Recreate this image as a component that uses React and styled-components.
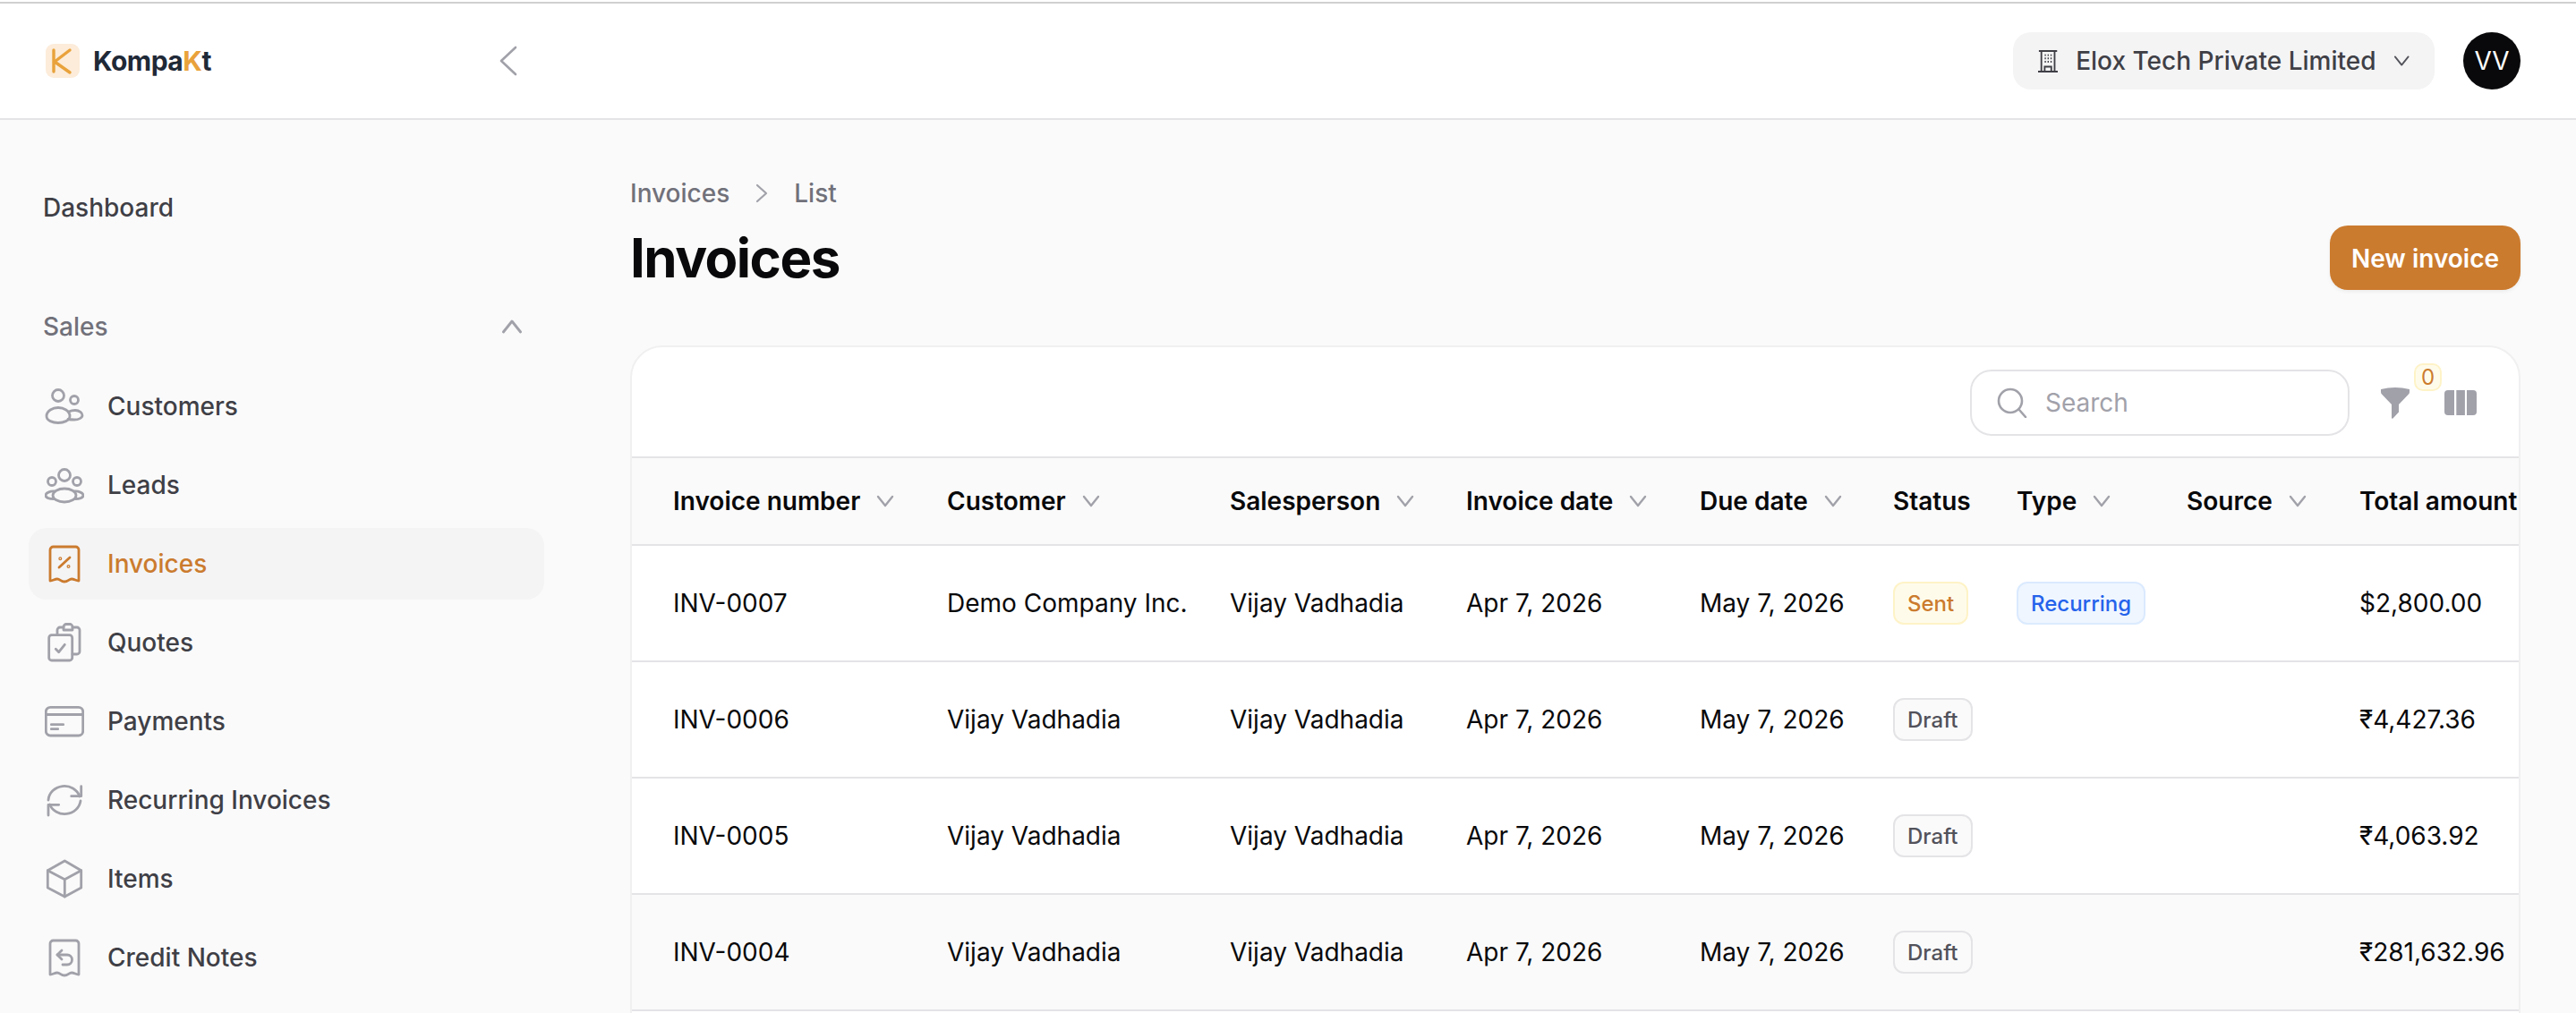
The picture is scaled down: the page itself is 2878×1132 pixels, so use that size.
import React from 'react';
import styled, { createGlobalStyle } from 'styled-components';

const GlobalStyle = createGlobalStyle`
    * { box-sizing: border-box; }
    html, body { margin: 0; height: 100%; overflow: hidden; }
    body {
        background: #fafafa;
        color: #09090b;
        font-family: 'Inter', 'Liberation Sans', sans-serif;
        font-size: 28px;
    }
`;

const columns = '306px 316px 264px 261px 216px 138px 190px 193px 1fr';

const invoices = [
    { number: 'INV-0007', customer: 'Demo Company Inc.', status: 'Sent', type: 'Recurring', total: '$2,800.00' },
    { number: 'INV-0006', customer: 'Vijay Vadhadia', status: 'Draft', total: '₹4,427.36' },
    { number: 'INV-0005', customer: 'Vijay Vadhadia', status: 'Draft', total: '₹4,063.92' },
    { number: 'INV-0004', customer: 'Vijay Vadhadia', status: 'Draft', total: '₹281,632.96', hovered: true },
];

const headings = [
    { label: 'Invoice number', sortable: true },
    { label: 'Customer', sortable: true },
    { label: 'Salesperson', sortable: true },
    { label: 'Invoice date', sortable: true },
    { label: 'Due date', sortable: true },
    { label: 'Status' },
    { label: 'Type', sortable: true },
    { label: 'Source', sortable: true },
    { label: 'Total amount' },
];

const badgeColors = {
    Sent: { bg: '#fffbeb', line: '#fef3c7', text: '#cb7b2e' },
    Recurring: { bg: '#eff6ff', line: '#dbeafe', text: '#2563eb' },
    Draft: { bg: '#fafafa', line: '#e4e4e7', text: '#52525b' },
};

const NavSvg = ({ children }) => (
    <NavIconSvg viewBox="0 0 44 44" fill="none" stroke="currentColor" strokeWidth="2.8" strokeLinecap="round" strokeLinejoin="round">
        {children}
    </NavIconSvg>
);

const receipt = 'M6 41V6.5A3.5 3.5 0 0 1 9.5 3h25A3.5 3.5 0 0 1 38 6.5V41C35 41 33 39 30 39C27 39 26 42 22 42C18 42 17 39 14 39C11 39 9 41 6 41Z';

const navItems = [
    {
        label: 'Customers',
        icon: (
            <NavSvg>
                <circle cx="15" cy="10" r="6.5" />
                <circle cx="33" cy="15" r="4.5" />
                <path d="M2 33C2 27 9 23.5 15 23.5C21 23.5 28 27 28 33C28 38 21 40.5 15 40.5C9 40.5 2 38 2 33Z" />
                <path d="M27 28C29 27 32 26.5 34 26.5C39 26.5 42 29.5 42 32C42 35 38 37 33 37C31 37 29 37 26 36.5" />
            </NavSvg>
        ),
    },
    {
        label: 'Leads',
        icon: (
            <NavSvg>
                <circle cx="22" cy="11" r="6.5" />
                <circle cx="8" cy="18" r="4.5" />
                <circle cx="36" cy="18" r="4.5" />
                <ellipse cx="22" cy="33.5" rx="13" ry="7.5" />
                <path d="M11 29C6 28.5 1 31 1 33.5C1 36 5 37.5 10 37.5" />
                <path d="M33 29C38 28.5 43 31 43 33.5C43 36 39 37.5 34 37.5" />
            </NavSvg>
        ),
    },
    {
        label: 'Invoices',
        active: true,
        icon: (
            <NavSvg>
                <path d={receipt} />
                <path d="M16 26L28 15" />
                <circle cx="17.3" cy="16.3" r="0.6" />
                <circle cx="26.5" cy="25" r="0.6" />
            </NavSvg>
        ),
    },
    {
        label: 'Quotes',
        icon: (
            <NavSvg>
                <rect x="4.7" y="13.7" width="26" height="28.3" rx="3" />
                <path d="M14 13V8a3 3 0 0 1 3-3h4M31 5h5a3 3 0 0 1 3 3v24a3 3 0 0 1-3 3h-5" />
                <path d="M21 8V4.5a3 3 0 0 1 3-3h4a3 3 0 0 1 3 3V8Z" />
                <path d="M12.3 29.3L15.7 32.7L22.3 24.3" />
            </NavSvg>
        ),
    },
    {
        label: 'Payments',
        icon: (
            <NavSvg>
                <rect x="1.3" y="6.3" width="41.4" height="31.7" rx="5" />
                <path d="M1.3 14.5H42.7" />
                <path d="M7.3 25.7H20.7M7.3 30.7H14.7" />
            </NavSvg>
        ),
    },
    {
        label: 'Recurring Invoices',
        icon: (
            <NavSvg>
                <path d="M4 22A18 17 0 0 1 39 18" />
                <path d="M40.7 6.7V17.7H29.7" />
                <path d="M40 23A18 17 0 0 1 5.5 27" />
                <path d="M4 39V27.3H15.7" />
            </NavSvg>
        ),
    },
    {
        label: 'Items',
        icon: (
            <NavSvg>
                <path d="M22.3 2L40.7 12.7V32L22.3 42L3.3 32V12.7Z" />
                <path d="M3.3 12.7L22.3 22.7L40.7 12.7M22.3 22.7V42" />
            </NavSvg>
        ),
    },
    {
        label: 'Credit Notes',
        icon: (
            <NavSvg>
                <path d={receipt} />
                <path d="M19 14L14 19L19 24" />
                <path d="M14 19H25a5.5 5.5 0 0 1 0 11H20" />
            </NavSvg>
        ),
    },
];

const Chevron = ({ size = 20, direction = 'down', color = '#a1a1aa', weight = 2.4 }) => {
    const points = {
        down: 'M2 5L10 15L18 5',
        up: 'M2 15L10 5L18 15',
    };
    return (
        <svg width={size} height={size} viewBox="0 0 20 20" fill="none" stroke={color} strokeWidth={weight} strokeLinecap="round" strokeLinejoin="round">
            <path d={points[direction]} />
        </svg>
    );
};

export default function App() {
    return (
        <Page>
            <GlobalStyle />
            <TopBar>
                <BrandArea>
                    <Brand>
                        <LogoMark viewBox="0 0 38 38">
                            <rect width="38" height="38" rx="9" fill="#fcecd9" />
                            <path d="M9 7V31M27 7L10 20L27 32" fill="none" stroke="#e9a23b" strokeWidth="3.4" strokeLinecap="round" strokeLinejoin="round" />
                        </LogoMark>
                        <Wordmark>Kompa<Accent>K</Accent>t</Wordmark>
                    </Brand>
                    <svg width="20" height="34" viewBox="0 0 20 34" fill="none" stroke="#a1a1aa" strokeWidth="2.6" strokeLinecap="round" strokeLinejoin="round">
                        <path d="M18 2L2 17L18 32" />
                    </svg>
                </BrandArea>
                <TopActions>
                    <CompanyPill>
                        <svg width="24" height="27" viewBox="0 0 24 27" fill="none" stroke="#3f3f46" strokeWidth="2">
                            <path d="M1 1H23M4 1V25M20 1V25M0 26H24" />
                            <path d="M8 25V20H16V25" />
                            <path d="M8 6H9.5M11.5 6H13M15 6H16.5M8 10H9.5M11.5 10H13M15 10H16.5M8 14H9.5M11.5 14H13M15 14H16.5" />
                        </svg>
                        <CompanyName>Elox Tech Private Limited</CompanyName>
                        <Chevron size={20} weight={2} color="#52525b" />
                    </CompanyPill>
                    <Avatar>VV</Avatar>
                </TopActions>
            </TopBar>
            <Body>
                <Sidebar>
                    <NavItem>Dashboard</NavItem>
                    <SectionHead>
                        <span>Sales</span>
                        <Chevron size={24} direction="up" />
                    </SectionHead>
                    <NavList>
                        {navItems.map((item) => (
                            <NavRow key={item.label} $active={item.active}>
                                {item.icon}
                                {item.label}
                            </NavRow>
                        ))}
                    </NavList>
                </Sidebar>
                <Main>
                    <Breadcrumb>
                        <span>Invoices</span>
                        <svg width="16" height="22" viewBox="0 0 16 22" fill="none" stroke="#a1a1aa" strokeWidth="2.2" strokeLinecap="round" strokeLinejoin="round">
                            <path d="M3 2L13 11L3 20" />
                        </svg>
                        <span>List</span>
                    </Breadcrumb>
                    <TitleRow>
                        <Title>Invoices</Title>
                        <PrimaryButton>New invoice</PrimaryButton>
                    </TitleRow>
                    <Card>
                        <Toolbar>
                            <SearchBox>
                                <svg width="34" height="34" viewBox="0 0 34 34" fill="none" stroke="#a1a1aa" strokeWidth="2.6" strokeLinecap="round">
                                    <circle cx="15" cy="15" r="13" />
                                    <path d="M25 25L32 33" />
                                </svg>
                                <SearchInput placeholder="Search" />
                            </SearchBox>
                            <ToolIcons>
                                <FilterWrap>
                                    <svg width="34" height="36" viewBox="0 0 34 36" fill="#a1a1aa">
                                        <path d="M1 3Q17 -1 33 3V6Q33 7.5 32 8.5L21 20V28.5L14.5 35.5Q13 36.5 13 34.5V20L2 8.5Q1 7.5 1 6Z" />
                                    </svg>
                                    <FilterCount>0</FilterCount>
                                </FilterWrap>
                                <svg width="36" height="28" viewBox="0 0 36 28" fill="#a1a1aa">
                                    <path d="M11 0H4a4 4 0 0 0-4 4V24a4 4 0 0 0 4 4H11Z" />
                                    <rect x="13.3" width="9.6" height="28" />
                                    <path d="M25 0H32a4 4 0 0 1 4 4V24a4 4 0 0 1-4 4H25Z" />
                                </svg>
                            </ToolIcons>
                        </Toolbar>
                        <HeadRow>
                            {headings.map((h) => (
                                <HeadCell key={h.label}>
                                    {h.label}
                                    {h.sortable && <Chevron />}
                                </HeadCell>
                            ))}
                        </HeadRow>
                        {invoices.map((inv) => (
                            <DataRow key={inv.number} $hovered={inv.hovered}>
                                <Cell>{inv.number}</Cell>
                                <Cell>{inv.customer}</Cell>
                                <Cell>Vijay Vadhadia</Cell>
                                <Cell>Apr 7, 2026</Cell>
                                <Cell>May 7, 2026</Cell>
                                <Cell><Badge $kind={inv.status}>{inv.status}</Badge></Cell>
                                <Cell>{inv.type && <Badge $kind={inv.type}>{inv.type}</Badge>}</Cell>
                                <Cell />
                                <Cell>{inv.total}</Cell>
                            </DataRow>
                        ))}
                    </Card>
                </Main>
            </Body>
        </Page>
    );
}

const Page = styled.div`
    height: 100vh;
    display: flex;
    flex-direction: column;
    padding-top: 2px;
    background: #fff;
`;
const TopBar = styled.header`
    height: 132px;
    flex: none;
    display: flex;
    align-items: center;
    justify-content: space-between;
    padding: 0 62px 0 51px;
    background: #fff;
    border-top: 2px solid #d0d0d0;
    border-bottom: 2px solid #e4e4e7;
`;
const BrandArea = styled.div`
    width: 527px;
    display: flex;
    align-items: center;
    justify-content: space-between;
`;
const Brand = styled.div`
    display: flex;
    align-items: center;
    gap: 15px;
`;
const LogoMark = styled.svg`
    width: 38px;
    height: 38px;
`;
const Wordmark = styled.div`
    font-size: 30px;
    font-weight: 700;
    letter-spacing: -0.5px;
    color: #1f2937;
`;
const Accent = styled.span`
    color: #e9a23b;
`;
const TopActions = styled.div`
    display: flex;
    align-items: center;
    gap: 32px;
`;
const CompanyPill = styled.div`
    height: 64px;
    width: 471px;
    display: flex;
    align-items: center;
    padding: 0 28px;
    background: #f4f4f5;
    border-radius: 20px;
    color: #3f3f46;
`;
const CompanyName = styled.span`
    margin: 0 19px 0 20px;
    font-weight: 500;
    white-space: nowrap;
`;
const Avatar = styled.div`
    width: 64px;
    height: 64px;
    border-radius: 50%;
    background: #09090b;
    color: #fff;
    display: flex;
    align-items: center;
    justify-content: center;
`;
const Body = styled.div`
    flex: 1;
    min-height: 0;
    display: flex;
    background: #fafafa;
`;
const Sidebar = styled.aside`
    width: 640px;
    flex: none;
    padding: 58px 32px 0;
`;
const NavItem = styled.div`
    height: 80px;
    display: flex;
    align-items: center;
    padding-left: 16px;
    font-weight: 500;
    color: #3f3f46;
`;
const SectionHead = styled.div`
    height: 40px;
    margin: 73px 0 29px;
    display: flex;
    align-items: center;
    justify-content: space-between;
    padding: 0 24px 0 16px;
    color: #71717a;
    font-weight: 500;
`;
const NavList = styled.nav`
    display: flex;
    flex-direction: column;
    gap: 8px;
`;
const NavRow = styled.div`
    height: 80px;
    display: flex;
    align-items: center;
    gap: 26px;
    padding-left: 18px;
    border-radius: 20px;
    font-weight: 500;
    color: ${(p) => (p.$active ? '#cb7b2e' : '#3f3f46')};
    background: ${(p) => (p.$active ? '#f4f4f5' : 'transparent')};
    svg {
        color: ${(p) => (p.$active ? '#cb7b2e' : '#a1a1aa')};
    }
`;
const NavIconSvg = styled.svg`
    width: 44px;
    height: 44px;
    flex: none;
`;
const Main = styled.main`
    flex: 1;
    min-width: 0;
    padding: 62px 62px 0 64px;
`;
const Breadcrumb = styled.div`
    height: 40px;
    display: flex;
    align-items: center;
    gap: 28px;
    color: #71717a;
    font-weight: 500;
`;
const TitleRow = styled.div`
    margin-top: 16px;
    height: 72px;
    display: flex;
    align-items: center;
    justify-content: space-between;
`;
const Title = styled.h1`
    margin: 0;
    font-size: 60px;
    font-weight: 700;
    letter-spacing: -1.5px;
    color: #09090b;
`;
const PrimaryButton = styled.button`
    height: 72px;
    width: 213px;
    border: none;
    padding: 2px 0 0;
    border-radius: 20px;
    background: #cb7b2e;
    color: #fff;
    font-family: inherit;
    font-size: 28px;
    font-weight: 600;
    box-shadow: 0 2px 4px rgba(0, 0, 0, 0.06);
`;
const Card = styled.section`
    margin-top: 62px;
    min-height: 900px;
    background: #fff;
    border: 2px solid #f0f0f1;
    border-radius: 36px;
    overflow: hidden;
`;
const Toolbar = styled.div`
    height: 124px;
    display: flex;
    align-items: center;
    justify-content: flex-end;
    padding: 2px 47px 0 0;
    border-bottom: 2px solid #e4e4e7;
`;
const SearchBox = styled.label`
    width: 424px;
    height: 74px;
    display: flex;
    align-items: center;
    gap: 20px;
    padding: 0 28px;
    border: 2px solid #e4e4e7;
    border-radius: 24px;
`;
const SearchInput = styled.input`
    flex: 1;
    min-width: 0;
    border: none;
    outline: none;
    padding: 0;
    font-family: inherit;
    font-size: 28px;
    color: #09090b;
    &::placeholder {
        color: #a1a1aa;
        opacity: 1;
    }
`;
const ToolIcons = styled.div`
    display: flex;
    align-items: center;
    gap: 38px;
    margin-left: 34px;
`;
const FilterWrap = styled.div`
    position: relative;
    width: 34px;
    height: 36px;
`;
const FilterCount = styled.span`
    position: absolute;
    left: 38px;
    top: -26px;
    width: 31px;
    height: 31px;
    display: flex;
    align-items: center;
    justify-content: center;
    font-size: 24px;
    color: #cb7b2e;
    background: #fffbeb;
    border: 2px solid #fef3c7;
    border-radius: 10px;
`;
const HeadRow = styled.div`
    height: 98px;
    display: grid;
    grid-template-columns: ${columns};
    padding-left: 46px;
    background: #fafafa;
    border-bottom: 2px solid #e4e4e7;
`;
const HeadCell = styled.div`
    display: flex;
    align-items: center;
    gap: 18px;
    font-weight: 600;
    color: #09090b;
    white-space: nowrap;
`;
const DataRow = styled.div`
    height: 130px;
    display: grid;
    grid-template-columns: ${columns};
    padding-left: 46px;
    background: ${(p) => (p.$hovered ? '#fafafa' : '#fff')};
    border-bottom: 2px solid #e4e4e7;
`;
const Cell = styled.div`
    display: flex;
    align-items: center;
    color: #09090b;
    white-space: nowrap;
`;
const Badge = styled.span`
    height: 48px;
    display: inline-flex;
    align-items: center;
    padding: 0 14px;
    font-size: 24px;
    font-weight: 500;
    border-radius: 12px;
    color: ${(p) => badgeColors[p.$kind].text};
    background: ${(p) => badgeColors[p.$kind].bg};
    border: 2px solid ${(p) => badgeColors[p.$kind].line};
`;
